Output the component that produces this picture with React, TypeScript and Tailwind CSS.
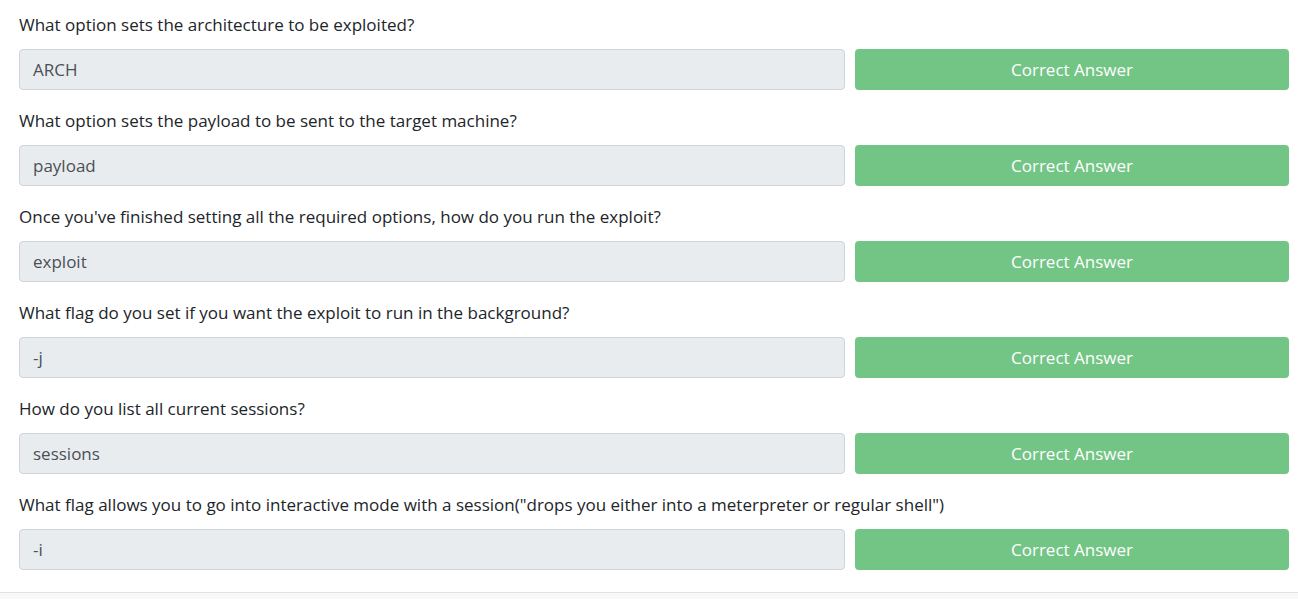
const questions = [
  { q: 'What option sets the architecture to be exploited?', a: 'ARCH' },
  { q: 'What option sets the payload to be sent to the target machine?', a: 'payload' },
  { q: "Once you've finished setting all the required options, how do you run the exploit?", a: 'exploit' },
  { q: 'What flag do you set if you want the exploit to run in the background?', a: '-j' },
  { q: 'How do you list all current sessions?', a: 'sessions' },
  {
    q: 'What flag allows you to go into interactive mode with a session("drops you either into a meterpreter or regular shell")',
    a: '-i',
  },
]

export default function App() {
  return (
    <div className="min-h-[599px] bg-white flex flex-col font-['Open_Sans',sans-serif]">
      <div className="pl-[19px] pr-[9px] pt-[13px] pb-[22px] flex flex-col gap-[19px]">
        {questions.map(item => (
          <div key={item.q} className="flex flex-col gap-[12px]">
            <p className="text-[17px] leading-[24px] text-[#212529]">{item.q}</p>
            <div className="flex gap-[10px]">
              <div className="flex-1 h-[41px] flex items-center px-[13px] rounded-[4px] border border-[#ced4da] bg-[#e9ecef] text-[17px] text-[#495057]">
                {item.a}
              </div>
              <button
                type="button"
                className="w-[434px] h-[41px] rounded-[4px] bg-[#73c586] text-white text-[17px]"
              >
                Correct Answer
              </button>
            </div>
          </div>
        ))}
      </div>
      <div className="flex-1 border-t border-[#e3e3e3] bg-[#f8f8f8]" />
    </div>
  )
}
